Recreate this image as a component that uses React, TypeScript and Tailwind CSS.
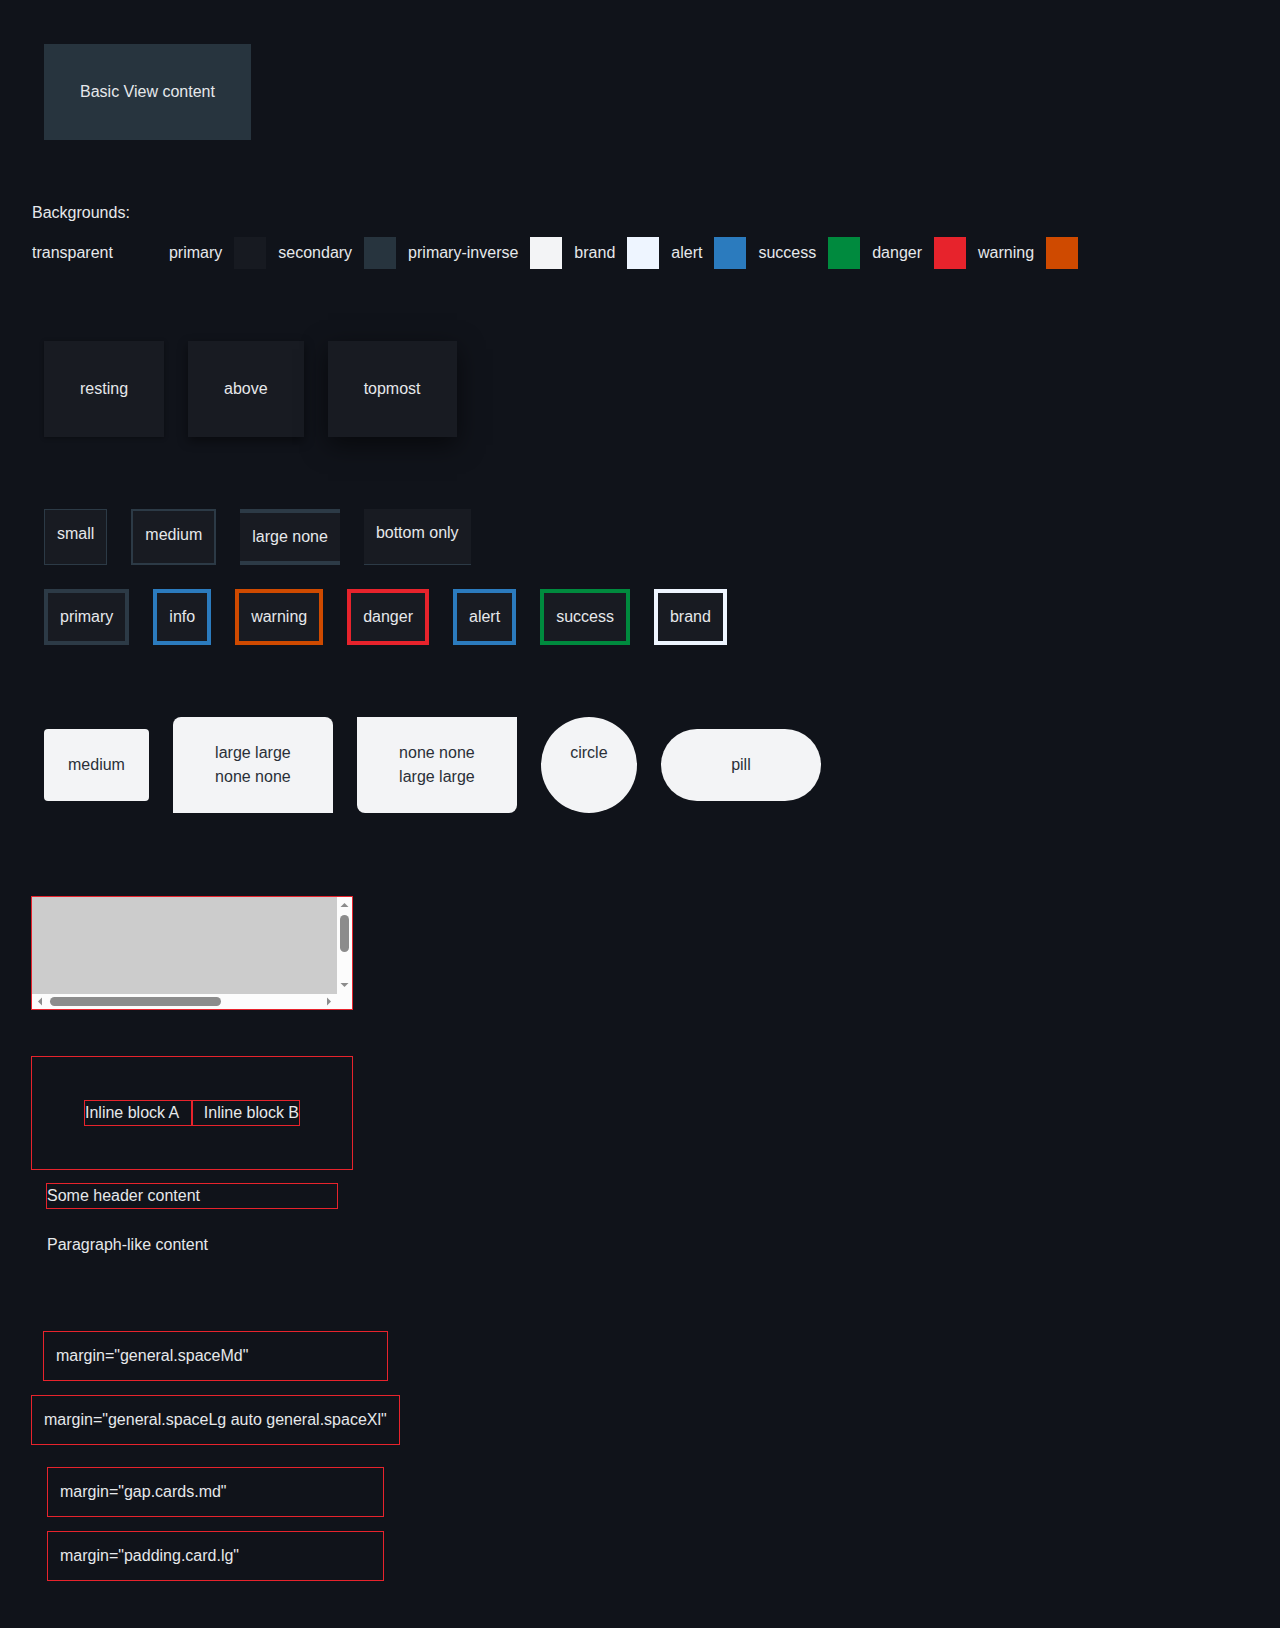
import type { ReactNode } from "react";

const swatches: { label: string; color: string }[] = [
  { label: "transparent", color: "bg-transparent" },
  { label: "primary", color: "bg-[#171a21]" },
  { label: "secondary", color: "bg-[#27343e]" },
  { label: "primary-inverse", color: "bg-[#f3f4f6]" },
  { label: "brand", color: "bg-[#eef5ff]" },
  { label: "alert", color: "bg-[#2b7bbe]" },
  { label: "success", color: "bg-[#008a3e]" },
  { label: "danger", color: "bg-[#e7232c]" },
  { label: "warning", color: "bg-[#cf4a00]" },
];

const borderColors: { label: string; border: string }[] = [
  { label: "primary", border: "border-[#2c3a46]" },
  { label: "info", border: "border-[#2b7bbe]" },
  { label: "warning", border: "border-[#cf4a00]" },
  { label: "danger", border: "border-[#e7232c]" },
  { label: "alert", border: "border-[#2b7bbe]" },
  { label: "success", border: "border-[#008a3e]" },
  { label: "brand", border: "border-[#eef5ff]" },
];

function Tile({ className, children }: { className: string; children: ReactNode }) {
  return <div className={`bg-[#181b22] ${className}`}>{children}</div>;
}

function Outlined({ className, children }: { className?: string; children?: ReactNode }) {
  return <div className={`border border-[#e7232c] ${className ?? ""}`}>{children}</div>;
}

// classic scrollbars, drawn so they show up regardless of the browser's overlay mode
function VScrollbar() {
  return (
    <svg width="15" height="97" viewBox="0 0 15 97" className="block shrink-0 bg-[#fcfcfc]">
      <polygon points="3.5,10 11.5,10 7.5,6" fill="#8c8c8c" />
      <rect x="3" y="18" width="9" height="37" rx="4.5" fill="#8c8c8c" />
      <polygon points="3.5,86 11.5,86 7.5,90" fill="#8c8c8c" />
    </svg>
  );
}

function HScrollbar() {
  return (
    <svg width="305" height="15" viewBox="0 0 305 15" className="block shrink-0 bg-[#fcfcfc]">
      <polygon points="10,3.5 10,11.5 6,7.5" fill="#8c8c8c" />
      <rect x="18" y="3" width="171" height="9" rx="4.5" fill="#8c8c8c" />
      <polygon points="295,3.5 295,11.5 299,7.5" fill="#8c8c8c" />
    </svg>
  );
}

export default function App() {
  return (
    <div
      className="h-[1628px] bg-[#10131a] pl-[31px] pt-[44px] text-[16px] leading-6 text-[#e6e8eb]"
      style={{ fontFamily: '"Liberation Sans", Arial, sans-serif' }}
    >
      {/* basic view */}
      <div className="ml-[13px] w-fit bg-[#27343e] p-9">Basic View content</div>

      {/* backgrounds */}
      <div className="ml-px mt-[61px]">Backgrounds:</div>
      <div className="ml-px mt-3 flex items-center gap-3">
        {swatches.map((s) => (
          <div key={s.label} className="contents">
            <span>{s.label}</span>
            <span className={`h-8 w-8 shrink-0 ${s.color}`} />
          </div>
        ))}
      </div>

      {/* elevation */}
      <div className="ml-[13px] mt-[72px] flex gap-6">
        <Tile className="p-9 shadow-[0_1px_4px_rgba(0,0,0,0.35)]">resting</Tile>
        <Tile className="p-9 shadow-[0_4px_10px_rgba(0,0,0,0.45)]">above</Tile>
        <Tile className="p-9 shadow-[0_8px_24px_rgba(0,0,0,0.55)]">topmost</Tile>
      </div>

      {/* border widths */}
      <div className="ml-[13px] mt-[72px] flex gap-6">
        <Tile className="border border-[#2c3a46] p-3">small</Tile>
        <Tile className="border-2 border-[#2c3a46] p-3">medium</Tile>
        <Tile className="border-y-4 border-[#2c3a46] p-3">large none</Tile>
        <Tile className="border-b border-[#2c3a46] p-3">bottom only</Tile>
      </div>

      {/* border colours */}
      <div className="ml-[13px] mt-6 flex gap-6">
        {borderColors.map((b) => (
          <Tile key={b.label} className={`border-4 p-3 ${b.border}`}>
            {b.label}
          </Tile>
        ))}
      </div>

      {/* radius */}
      <div className="ml-[13px] mt-[72px] flex items-center gap-6 text-[#2a3038]">
        <div className="rounded bg-[#f3f4f6] p-6">medium</div>
        <div className="w-[160px] rounded-t-lg bg-[#f3f4f6] p-6 text-center">large large none none</div>
        <div className="w-[160px] rounded-b-lg bg-[#f3f4f6] p-6 text-center">none none large large</div>
        <div className="h-24 w-24 rounded-full bg-[#f3f4f6] pt-6 text-center">circle</div>
        <div className="flex h-[72px] w-[160px] items-center justify-center rounded-full bg-[#f3f4f6]">pill</div>
      </div>

      {/* overflow */}
      <Outlined className="mt-[83px] flex h-[114px] w-[322px] flex-col">
        <div className="flex">
          <div className="h-[97px] w-[305px] bg-[#cccccc]" />
          <VScrollbar />
        </div>
        <div className="flex">
          <HScrollbar />
          <div className="h-[15px] w-[15px] bg-[#fcfcfc]" />
        </div>
      </Outlined>

      {/* inline blocks */}
      <Outlined className="mt-[46px] flex h-[114px] w-[322px] items-center justify-center">
        <span className="inline-block w-[108px] border border-[#e7232c] text-left">Inline block A</span>
        <span className="inline-block w-[108px] border border-[#e7232c] text-right">Inline block B</span>
      </Outlined>

      <Outlined className="ml-[15px] mt-[13px] w-[292px]">Some header content</Outlined>
      <p className="ml-[16px] mt-[24px]">Paragraph-like content</p>

      {/* margins */}
      <div className="mt-[74px] w-[369px]">
        <Outlined className="mx-3 px-3 py-3">margin="general.spaceMd"</Outlined>
        <Outlined className="mt-[14px] whitespace-nowrap px-3 py-3">
          margin="general.spaceLg auto general.spaceXl"
        </Outlined>
        <Outlined className="mx-4 mt-[22px] px-3 py-3">margin="gap.cards.md"</Outlined>
        <Outlined className="mx-4 mt-[14px] px-3 py-3">margin="padding.card.lg"</Outlined>
      </div>
    </div>
  );
}
